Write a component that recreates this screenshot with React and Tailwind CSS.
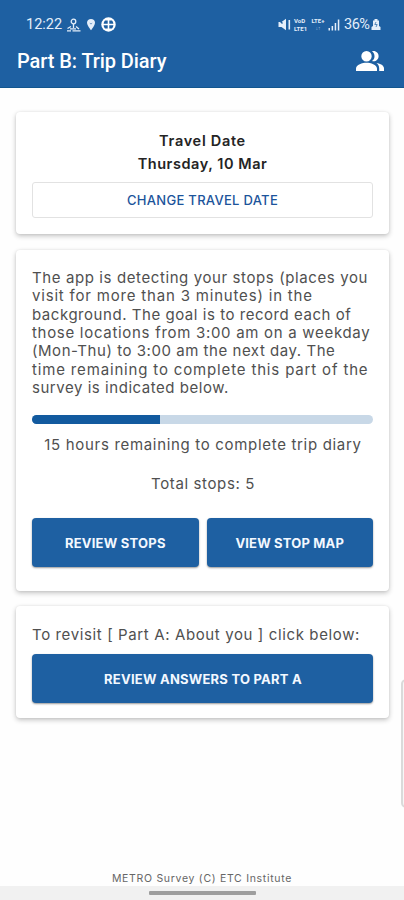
import React from 'react';

const DETAILS = [
  { text: 'The app is detecting your stops (places you', tracking: 'tracking-[0.6px]' },
  { text: 'visit for more than 3 minutes) in the', tracking: 'tracking-[0.81px]' },
  { text: 'background. The goal is to record each of', tracking: 'tracking-[0.54px]' },
  { text: 'those locations from 3:00 am on a weekday', tracking: 'tracking-[0.7px]' },
  { text: '(Mon-Thu) to 3:00 am the next day. The', tracking: 'tracking-[0.54px]' },
  { text: 'time remaining to complete this part of the', tracking: 'tracking-[0.84px]' },
  { text: 'survey is indicated below.', tracking: 'tracking-[0.54px]' }
];

const Card = ({ className, children }) => {
  return <section className={`mr-[15px] ml-4 rounded-[4px] bg-white px-4 shadow-[0_2px_5px_rgba(0,0,0,0.24),0_0_2px_rgba(0,0,0,0.08)] ${className}`}>
      {children}
    </section>;
};

const PrimaryButton = ({ className, children }) => {
  return <button className={`flex h-[49px] items-center justify-center rounded-[4px] bg-[#1e60a2] pt-[2px] text-[13px] font-bold text-[#f3f8ff] shadow-[0_1px_2px_rgba(0,0,0,0.4)] ${className}`}>
      {children}
    </button>;
};

const StatusBar = () => {
  return <div className="flex h-10 items-center justify-between pt-[9px] pr-[23px] pl-[26px] text-[#e4eefa]">
      <div className="flex items-center">
        <span className="w-[36px] pt-px font-[Roboto] text-[14.5px] leading-none whitespace-nowrap">12:22</span>
        {/* location tracking */}
        <svg className="ml-[4px] h-[14px] w-[15px]" viewBox="0 0 15 14" fill="none" stroke="currentColor">
          <circle cx="7.5" cy="3.5" r="2.3" strokeWidth="1.3" />
          <path d="M7.5 6v4M5 8.5l-3.500 2M10 8.500l3 2.500M1 12.800h4M6.500 12.800h8M4 10.800h6" strokeWidth="1.3" />
        </svg>
        <svg className="ml-[5px] h-[13px] w-[10px]" viewBox="0 0 10 13">
          <path d="M5 1C2.600 1 1 2.600 1 4.700c0 2.700 4 7.500 4 7.500s4-4.800 4-7.500C9 2.600 7.400 1 5 1Z" fill="currentColor" />
          <path d="m3.800 5.200 1.200.8 1.200-.8" stroke="#1e60a2" strokeWidth=".6" fill="none" />
        </svg>
        <svg className="ml-[5px] h-[15px] w-[15px]" viewBox="0 0 15 15">
          <circle cx="7.5" cy="7.5" r="7.2" fill="white" />
          <path d="M4 3.500h2.700v3.200H2.600A5 5 0 0 1 4 3.500ZM8.300 3.500H11a5 5 0 0 1 1.400 3.200H8.300ZM2.600 8.300h4.100v3.200H4a5 5 0 0 1-1.400-3.200ZM8.300 8.300h4.100a5 5 0 0 1-1.400 3.200H8.300Z" fill="#1e60a2" />
        </svg>
      </div>
      <div className="flex items-center">
        {/* muted speaker */}
        <svg className="h-[13px] w-[13px]" viewBox="0 0 13 13">
          <path d="M.5 4h3L8 .8v11.400L3.500 9h-3Z" fill="currentColor" />
          <path d="m.5 1.500 4 4" stroke="#1e60a2" strokeWidth="1.4" />
          <path d="M11.300 2v9.500" stroke="currentColor" strokeWidth="1.6" />
        </svg>
        <div className="ml-[3px] flex w-[15px] flex-col font-[Roboto] text-[6px] leading-[7.5px] font-bold whitespace-nowrap">
          <span>VoD</span>
          <span>LTE1</span>
        </div>
        <div className="ml-[2px] flex w-[14px] flex-col items-center font-[Roboto] text-[6px] leading-[7.5px] font-bold whitespace-nowrap">
          <span>LTE+</span>
          <span className="text-[5px] opacity-60">↓↑</span>
        </div>
        <svg className="ml-[3px] h-[12px] w-[12px]" viewBox="0 0 12 12" fill="currentColor">
          <path d="M.5 9H2v2.500H.5zM3.600 7h1.500v4.500H3.600zM6.700 4h1.500v7.500H6.700zM9.800.5h1.500v11H9.800z" />
        </svg>
        <span className="ml-[4px] w-[27px] pt-px font-[Roboto] text-[14.5px] leading-none tracking-[-0.5px] whitespace-nowrap">36%</span>
        <svg className="h-[13px] w-[10px]" viewBox="0 0 10 13">
          <path d="M3.500 1h3v1.500H8V8l1.500 1v3h-9V9L2 8V2.500h1.500Z" fill="currentColor" />
          <path d="M5 4 3.800 6.500h2.400L5 9" stroke="#1e60a2" strokeWidth=".7" fill="none" />
        </svg>
      </div>
    </div>;
};

const App = () => {
  return <div className="relative flex h-[900px] w-full flex-col overflow-hidden bg-[#fefefe] font-[Inter,sans-serif] text-[#505050]">
      <header className="h-[88px] shrink-0 border-b border-[#12568f] bg-[#1e60a2]">
        <StatusBar />
        <div className="flex h-[41px] items-center justify-between pr-[19px] pl-[17px]">
          <h1 className="font-[Roboto] text-[20px] leading-none font-medium tracking-[-0.08px] whitespace-nowrap text-white">Part B: Trip Diary</h1>
          <svg className="h-7 w-[30px]" viewBox="0 0 30 28" fill="white">
            <path d="M11.500 4a5.200 5.200 0 1 0 0 10.400a5.200 5.200 0 0 0 0-10.400ZM11.500 15.700C7.500 15.700 1 17.500 1 21.500V24h21v-2.500c0-4-6.500-5.800-10.500-5.800Z" />
            <path d="M17 4.300c1.700 1.300 2.500 2.900 2.500 4.900s-.8 3.600-2.500 4.900c3.700.9 6.600-1.700 6.600-4.900S20.700 3.400 17 4.300ZM21.500 16.100c1.600 1.300 2.700 3 2.700 5.400V24H29v-2.500c0-3-3.500-4.700-7.500-5.400Z" />
          </svg>
        </div>
      </header>

      <Card className="mt-6 h-[122px] shrink-0 pt-[17px]">
        <div className="text-center text-[14.5px] leading-[23px] font-semibold text-[#242424]">
          <p className="tracking-[0.7px]">Travel Date</p>
          <p className="tracking-[0.55px]">Thursday, 10 Mar</p>
        </div>
        <button className="mt-[7px] flex h-9 w-full items-center justify-center rounded-[3px] border border-[#e2e2e2] pt-[2px] text-[13px] font-medium tracking-[0.3px] text-[#1c549b]">CHANGE TRAVEL DATE</button>
      </Card>

      <Card className="mt-4 h-[341px] shrink-0 pt-[19px]">
        <div className="text-[15px] leading-[18.33px]">
          {DETAILS.map(line => <p key={line.text} className={`whitespace-nowrap ${line.tracking}`}>{line.text}</p>)}
        </div>
        <div className="mt-[18px] h-[9px] overflow-hidden rounded-full bg-[#c8d8e7]">
          <div className="h-full w-[128px] bg-[#125a9f]" />
        </div>
        <p className="mt-[11px] pl-px text-center text-[15px] leading-5 tracking-[0.68px] whitespace-nowrap">15 hours remaining to complete trip diary</p>
        <p className="mt-[19px] pl-px text-center text-[15px] leading-5 tracking-[0.62px]">Total stops: 5</p>
        <div className="mt-[24px] grid grid-cols-2 gap-2">
          <PrimaryButton className="tracking-[0.23px]">REVIEW STOPS</PrimaryButton>
          <PrimaryButton className="tracking-[0.18px]">VIEW STOP MAP</PrimaryButton>
        </div>
      </Card>

      <Card className="mt-[15px] h-[112px] shrink-0 pt-[19px]">
        <p className="text-[15px] leading-5 tracking-[0.62px] whitespace-nowrap">To revisit [ Part A: About you ] click below:</p>
        <PrimaryButton className="mt-[9px] w-full pl-px tracking-[0.23px]">REVIEW ANSWERS TO PART A</PrimaryButton>
      </Card>

      <footer className="mt-auto">
        <p className="text-center text-[10.5px] leading-[14px] tracking-[0.7px] text-[#666]">METRO Survey (C) ETC Institute</p>
        <div className="flex h-[14px] justify-center bg-[#f1f1f1] pt-[5px]">
          <div className="h-[4px] w-[107px] rounded-[1px] bg-[#9e9e9e]" />
        </div>
      </footer>

      {/* edge panel handle */}
      <div className="absolute top-[679px] right-[-8px] h-[129px] w-[11px] rounded-[5px] border-2 border-[#dadada] bg-[#f7f7f7]" />
    </div>;
};

export default App;
